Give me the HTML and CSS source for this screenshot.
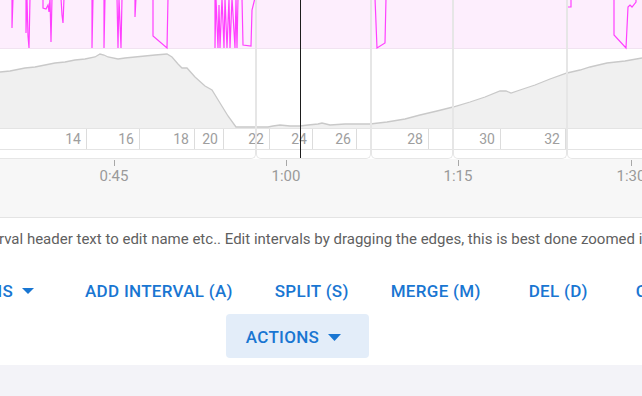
FILE: index.html
```html
<!DOCTYPE html>
<html lang="en">
<head>
  <meta charset="UTF-8" />
  <meta name="viewport" content="width=device-width, initial-scale=1.0" />
  <title>Intervals</title>
  <link rel="stylesheet" href="styles.css">
</head>
<body>
  <div class="panel">
    <div class="timeline">
      <svg class="plot" width="642" height="128" viewBox="0 0 642 128">
        <rect x="0" y="0" width="642" height="48" fill="#fdeefd" />
        <line x1="0" y1="48.5" x2="642" y2="48.5" stroke="#f1e3f1" />
        <path class="power" d="M12,-2 L12,28 L13,-2
          M26,-2 L26,33 L27,-2 L28,36 L29,48 L30,-2
          M43,-2 L43,8 L46,9 L48,5 L49,12 L50,-2 L51,42 L52,-2
          M61,-2 L62,15 L63,23 L64,-2
          M92,-2 L92,48 L93,-2
          M104,-2 L104,48 L105,-2
          M117,-2 L118,48 L119,-2 L121,48 L122,-2
          M135,-2 L135,17 L136,-2
          M153,-2 L153,36 L167,48 L168,-2
          M215,-2 L215,48 L216,-2 L218,48 L219,5 L220,48 L222,-2 L224,48 L225,-2 L227,48 L229,-2 L230,48 L232,-2 L235,48 L236,-2 L237,48 L238,-2
          M242,-2 L243,45 L251,46 L252,10 L254,2 L255,-2
          M375,-2 L377,48 L385,43 L386,-2
          M567,-2 L567,7 L571,7 L571,-2
          M614,-2 L614,35 L626,48 L628,7 L630,5 L632,7 L636,2 L636,-2" />
        <path class="elev-fill" d="M0,72 L10,71 L20,69 L25,68 L35,67 L45,65 L55,63 L65,62 L75,60 L85,59 L95,57 L100,54 L104,55 L108,57 L118,59 L125,58 L135,57 L145,56 L155,55 L167,54 L172,57 L178,64 L182,68 L187,68 L195,77 L205,86 L212,90 L220,103 L228,116 L236,127 L268,127 L273,126 L280,125 L290,126 L300,126 L308,125 L318,124 L322,123 L330,125 L345,124 L370,124 L387,122 L405,119 L420,115 L437,111 L453,107 L470,102 L485,97 L500,91 L506,91 L511,93 L520,90 L535,85 L550,79 L567,73 L580,70 L590,67 L607,63 L625,61 L642,58 L642,128 L0,128 Z" />
        <path class="elev-line" d="M0,72 L10,71 L20,69 L25,68 L35,67 L45,65 L55,63 L65,62 L75,60 L85,59 L95,57 L100,54 L104,55 L108,57 L118,59 L125,58 L135,57 L145,56 L155,55 L167,54 L172,57 L178,64 L182,68 L187,68 L195,77 L205,86 L212,90 L220,103 L228,116 L236,127 L268,127 L273,126 L280,125 L290,126 L300,126 L308,125 L318,124 L322,123 L330,125 L345,124 L370,124 L387,122 L405,119 L420,115 L437,111 L453,107 L470,102 L485,97 L500,91 L506,91 L511,93 L520,90 L535,85 L550,79 L567,73 L580,70 L590,67 L607,63 L625,61 L642,58" />
      </svg>

      <div class="laps">
        <div class="lap" style="width:87px">14</div>
        <div class="lap" style="width:53px">16</div>
        <div class="lap" style="width:55px">18</div>
        <div class="lap" style="width:29px">20</div>
        <div class="lap" style="width:46px">22</div>
        <div class="lap" style="width:43px">24</div>
        <div class="lap" style="width:44px">26</div>
        <div class="lap" style="width:72px">28</div>
        <div class="lap" style="width:72px">30</div>
        <div class="lap" style="width:65px">32</div>
        <div class="lap lap-last"></div>
      </div>

      <!-- interval outlines drawn over the plot -->
      <div class="intervals">
        <div class="interval" style="width:276px"></div>
        <div class="interval" style="width:115px"></div>
        <div class="interval" style="width:82px"></div>
        <div class="interval" style="width:114px"></div>
        <div class="interval" style="width:134px"></div>
      </div>
      <div class="cursor"></div>
    </div>

    <div class="axis">
      <div class="tick" style="left:114px"><span>0:45</span></div>
      <div class="tick" style="left:286px"><span>1:00</span></div>
      <div class="tick" style="left:458px"><span>1:15</span></div>
      <div class="tick" style="left:631px"><span>1:30</span></div>
    </div>

    <p class="help">rval header text to edit name etc.. Edit intervals by dragging the edges, this is best done zoomed in.</p>

    <div class="toolbar">
      <button class="btn btn-menu"><span>OPTIONS</span>
        <svg class="caret" width="12" height="6" viewBox="0 0 12 6"><path d="M0 0H12L6 6Z" /></svg>
      </button>
      <button class="btn">ADD INTERVAL (A)</button>
      <button class="btn">SPLIT (S)</button>
      <button class="btn">MERGE (M)</button>
      <button class="btn btn-far">DEL (D)</button>
      <button class="btn btn-far">CLEAR</button>
    </div>

    <div class="toolbar toolbar-actions">
      <button class="btn btn-actions">ACTIONS
        <svg class="caret" width="13" height="7" viewBox="0 0 13 7"><path d="M0 0H13L6.5 7Z" /></svg>
      </button>
    </div>
  </div>
</body>
</html>
```

FILE: styles.css
```css
html, body {
  overflow: hidden;
}
body {
  margin: 0;
  background: #f3f3f8;
  font-family: Roboto, 'Liberation Sans', sans-serif;
  width: 642px;
}
.panel {
  background: #fff;
  box-shadow: 0 2px 2px rgba(0, 0, 0, 0.22);
  padding-bottom: 7px;
}
.timeline {
  position: relative;
  height: 159px;
}
.plot {
  display: block;
}
.power {
  fill: none;
  stroke: #ff40ff;
  stroke-width: 1.2;
}
.elev-fill {
  fill: #f0f0f0;
}
.elev-line {
  fill: none;
  stroke: #c9c9c9;
  stroke-width: 1.3;
}
.laps {
  display: flex;
  height: 20px;
  border-top: 1px solid #e4e4e4;
  border-bottom: 1px solid #e4e4e4;
}
.lap {
  box-sizing: border-box;
  flex: none;
  border-right: 1px solid #dcdcdc;
  padding-right: 5px;
  text-align: right;
  font-size: 14px;
  line-height: 21px;
  color: #9e9e9e;
}
.lap-last {
  flex: 1;
  border-right: none;
}
.intervals {
  position: absolute;
  top: 0;
  left: -20px;
  height: 159px;
  display: flex;
}
.interval {
  box-sizing: border-box;
  flex: none;
  height: 100%;
  border: 1px solid #e6e6e6;
  border-top: none;
  border-radius: 0 0 5px 5px;
}
.cursor {
  position: absolute;
  left: 300px;
  top: 0;
  width: 1px;
  height: 158px;
  background: #1d1d1d;
}
.axis {
  position: relative;
  height: 58px;
  background: #f7f7f7;
  border-bottom: 1px solid #e4e4e4;
}
.tick {
  position: absolute;
  top: 1px;
  width: 1px;
  height: 6px;
  background: #a8a8a8;
}
.tick span {
  position: absolute;
  top: 7px;
  left: 0;
  transform: translateX(-50%);
  font-size: 15px;
  line-height: 18px;
  color: #9a9a9a;
  white-space: nowrap;
}
.help {
  margin: 11px 0 0 -1px;
  font-size: 15px;
  line-height: 20px;
  color: #5f5f5f;
  white-space: nowrap;
  overflow: hidden;
}
.toolbar {
  display: flex;
  align-items: center;
  gap: 42px;
  margin-top: 24px;
  white-space: nowrap;
}
.btn {
  flex: none;
  display: flex;
  align-items: center;
  gap: 9px;
  border: none;
  background: none;
  padding: 6px 0;
  font-family: inherit;
  font-size: 17px;
  font-weight: 500;
  line-height: 24px;
  letter-spacing: 0.3px;
  color: #1976d2;
  cursor: pointer;
}
.btn-menu {
  width: 43px;
  justify-content: flex-end;
  overflow: hidden;
  padding-right: 9px;
}
.caret {
  flex: none;
  fill: currentColor;
}
.btn-far {
  margin-left: 6px;
}
.toolbar-actions {
  margin: 5px 0 0 -47px;
  justify-content: center;
}
.btn-actions {
  background: #e3edf9;
  border-radius: 4px;
  padding: 11px 28px 9px 20px;
}
```
